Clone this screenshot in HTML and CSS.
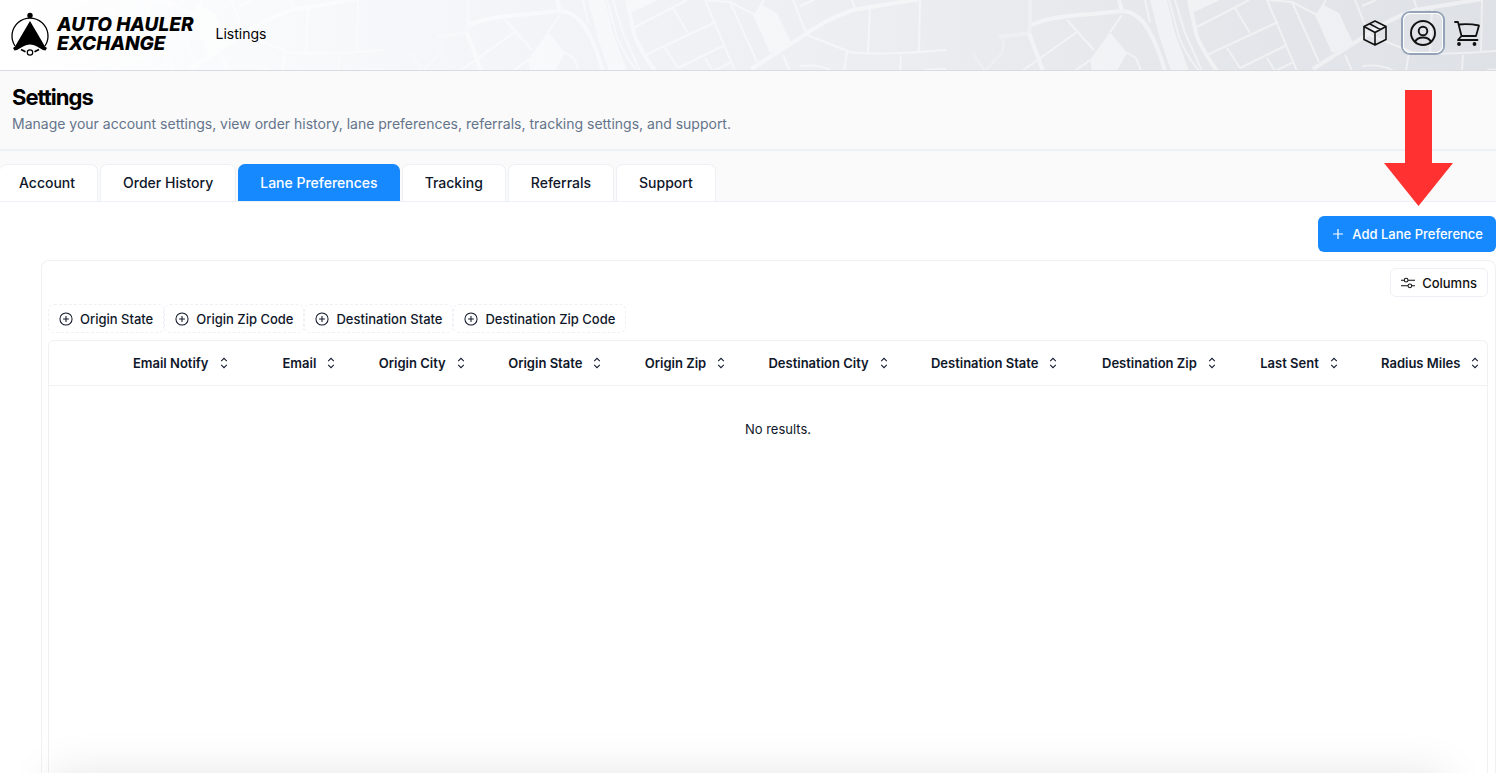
FILE: index.html
```html
<!DOCTYPE html>
<html lang="en">
<head>
    <meta charset="UTF-8">
    <meta name="viewport" content="width=device-width, initial-scale=1.0">
    <title>Settings - Auto Hauler Exchange</title>
    <link rel="stylesheet" href="styles.css">
</head>
<body>
    <!-- Shared icons -->
    <svg class="icon-defs" aria-hidden="true">
        <symbol id="sort" viewBox="0 0 15 15">
            <path d="M4.5 5.5 7.5 2.5l3 3M4.5 9.5l3 3 3-3" fill="none" stroke="currentColor" stroke-width="1.1"/>
        </symbol>
        <symbol id="plus-circle" viewBox="0 0 15 15">
            <path d="M7.5 1a6.5 6.5 0 1 0 0 13 6.5 6.5 0 0 0 0-13ZM7.5 4.4v6.2M4.4 7.5h6.2" fill="none" stroke="currentColor" stroke-width="1.1"/>
        </symbol>
    </svg>

    <header class="topbar">
        <svg class="topbar-map" aria-hidden="true">
            <defs>
                <pattern id="streets" x="-178" y="0" width="562" height="71" patternUnits="userSpaceOnUse">
                    <g fill="#fff">
                        <path d="M164 32 181 53 171 71H146L144 60Z"/>
                        <path d="M204 0H221L229 33 243 71H225L213 35Z"/>
                        <path d="M243 0H274L248 12Z"/>
                        <path d="M378 5 393 13 408 45 386 53 369 15Z"/>
                    </g>
                    <g fill="none" stroke="#fff" stroke-width="4">
                        <path d="M86 25Q100 17 146 14L176 11Q192 12 202 29 212 46 219 71M173 0 176 11"/>
                        <path d="M243 0 250 33Q253 45 271 71M367 69 416 38Q440 20 469 10L536-1"/>
                        <path d="M83 33 97 71"/>
                        <path d="M84 0V27L83 33 53 37" opacity=".5"/>
                    </g>
                    <g fill="none" stroke="#fff" stroke-width="2">
                        <path d="M58 40 56 53 39 71 27 53" opacity=".5"/>
                        <path d="M121 20 148 50M131 32 76 71M176 15 164 32M181 53 190 58 195 71M144 60 129 71"/>
                        <path d="M199 0 204 23M223 0 233 37Q240 55 253 71M229 0 239 33 256 71"/>
                        <path d="M251 27 303 0M261 55 332 22M294 68 341 45M289 8 304 33M281 48 294 68M321 0 351 71M321 58 329 71 348 62"/>
                        <path d="M321 0 346 2 371 15 380 0M346 2 373 62M399 55 406 71"/>
                        <path d="M409 0 423 35 466 52Q490 56 562 50M486 8 484 53M536 0 535 52M463 52 460 71M517 55 516 71"/>
                        <path d="M416 66Q436 64 448 71M541 70 562 69M468 0 471 9M416 6 430 0"/>
                    </g>
                </pattern>
            </defs>
            <rect width="100%" height="71" fill="url(#streets)" opacity=".45"/>
        </svg>

        <a class="brand" href="#">
            <svg class="brand-mark" viewBox="0 0 40 44" aria-hidden="true">
                <path d="M5 34A18 18 0 1 1 35 34" fill="none" stroke="#000" stroke-width="1.300"/>
                <circle cx="20" cy="3.500" r="2.700"/>
                <path d="M20 9 35 34.500 37 36 35.500 38.500 33 38 27 34.500Q20 30.500 13 34.500L7 38 4.500 38.500 3 36 5 34.500Z"/>
                <path d="M11 37.500l4.500 2.200M29 37.500l-4.500 2.200" stroke="#000" stroke-width="1.800"/>
                <circle cx="20" cy="40.500" r="2.700" fill="#fff" stroke="#000" stroke-width="1.200"/>
            </svg>
            <span class="brand-name"><span>AUTO HAULER</span><span>EXCHANGE</span></span>
        </a>
        <nav class="topnav"><a href="#">Listings</a></nav>

        <div class="topbar-actions">
            <button class="icon-btn" type="button" aria-label="Orders">
                <svg width="28" height="28" viewBox="0 0 28 28" fill="none" stroke="currentColor" stroke-width="1.600" stroke-linejoin="round" aria-hidden="true">
                    <path d="M14 2 25 7.500V20.500L14 26 3 20.500V7.500ZM3 7.500 14 13.500 25 7.500M14 13.500V26M8.500 4.800 19.500 10.600"/>
                </svg>
            </button>
            <button class="icon-btn is-focused" type="button" aria-label="Profile">
                <svg width="28" height="28" viewBox="0 0 28 28" fill="none" stroke="currentColor" stroke-width="1.900" aria-hidden="true">
                    <circle cx="14" cy="14" r="12"/>
                    <circle cx="14" cy="12" r="4.300"/>
                    <path d="M6 23Q8 18.500 14 18.500T22 23"/>
                </svg>
            </button>
            <button class="icon-btn" type="button" aria-label="Cart">
                <svg width="28" height="28" viewBox="0 0 28 28" fill="none" stroke="currentColor" stroke-width="1.800" stroke-linecap="round" stroke-linejoin="round" aria-hidden="true">
                    <path d="M2 3H5L8.500 17H23L26 6.500Q16 4.500 6 5.500M8.500 17 5 21H24.500"/>
                    <circle cx="6" cy="25" r="1" fill="currentColor"/>
                    <circle cx="21.500" cy="25" r="1" fill="currentColor"/>
                </svg>
            </button>
        </div>
    </header>

    <section class="page-head">
        <h1>Settings</h1>
        <p>Manage your account settings, view order history, lane preferences, referrals, tracking settings, and support.</p>
    </section>

    <nav class="tabs">
        <a class="tab tab-first" href="#">Account</a>
        <a class="tab" href="#">Order History</a>
        <a class="tab active" href="#" aria-current="page">Lane Preferences</a>
        <a class="tab" href="#">Tracking</a>
        <a class="tab" href="#">Referrals</a>
        <a class="tab" href="#">Support</a>
    </nav>

    <main>
        <div class="actions">
            <button class="add-btn" type="button">
                <svg width="14" height="14" viewBox="0 0 14 14" aria-hidden="true"><path d="M7 2v10M2 7h10" stroke="currentColor" stroke-width="1.200"/></svg>
                Add Lane Preference
            </button>
            <!-- Pointer to the add button -->
            <svg class="pointer" viewBox="0 0 69 116" aria-hidden="true"><path d="M21 0H48V73H69L34.500 116 0 73H21Z" fill="#ff3131"/></svg>
        </div>

        <div class="card">
            <div class="card-top">
                <button class="columns-btn" type="button">
                    <svg width="14" height="14" viewBox="0 0 15 15" fill="none" stroke="currentColor" stroke-width="1.100" aria-hidden="true">
                        <path d="M0 4.500H3.500M7.500 4.500H15M0 10.500H7.500M11.500 10.500H15"/>
                        <circle cx="5.500" cy="4.500" r="2"/>
                        <circle cx="9.500" cy="10.500" r="2"/>
                    </svg>
                    Columns
                </button>
            </div>

            <div class="filters">
                <button class="filter" type="button"><svg class="icon"><use href="#plus-circle"/></svg>Origin State</button>
                <button class="filter" type="button"><svg class="icon"><use href="#plus-circle"/></svg>Origin Zip Code</button>
                <button class="filter" type="button"><svg class="icon"><use href="#plus-circle"/></svg>Destination State</button>
                <button class="filter" type="button"><svg class="icon"><use href="#plus-circle"/></svg>Destination Zip Code</button>
            </div>

            <div class="table-wrap">
                <table>
                    <colgroup>
                        <col class="c-select"><col class="c-notify"><col class="c-email"><col class="c-ocity"><col class="c-ostate"><col class="c-ozip">
                        <col class="c-dcity"><col class="c-dstate"><col class="c-dzip"><col class="c-sent"><col>
                    </colgroup>
                    <thead>
                        <tr>
                            <th></th>
                            <th><button class="sort" type="button">Email Notify<svg class="icon"><use href="#sort"/></svg></button></th>
                            <th><button class="sort" type="button">Email<svg class="icon"><use href="#sort"/></svg></button></th>
                            <th><button class="sort" type="button">Origin City<svg class="icon"><use href="#sort"/></svg></button></th>
                            <th><button class="sort" type="button">Origin State<svg class="icon"><use href="#sort"/></svg></button></th>
                            <th><button class="sort" type="button">Origin Zip<svg class="icon"><use href="#sort"/></svg></button></th>
                            <th><button class="sort" type="button">Destination City<svg class="icon"><use href="#sort"/></svg></button></th>
                            <th><button class="sort" type="button">Destination State<svg class="icon"><use href="#sort"/></svg></button></th>
                            <th><button class="sort" type="button">Destination Zip<svg class="icon"><use href="#sort"/></svg></button></th>
                            <th><button class="sort" type="button">Last Sent<svg class="icon"><use href="#sort"/></svg></button></th>
                            <th><button class="sort" type="button">Radius Miles<svg class="icon"><use href="#sort"/></svg></button></th>
                        </tr>
                    </thead>
                    <tbody>
                        <tr><td class="empty" colspan="11">No results.</td></tr>
                    </tbody>
                </table>
            </div>
        </div>
    </main>
    <div class="bottom-shade"></div>
</body>
</html>
```
FILE: styles.css
```css
:root {
    --primary: #1789ff;
    --text: #0f172a;
    --muted: #64748b;
    --border: #edf0f4;
    --line: #f1f1f3;
}
* {
    box-sizing: border-box;
}
body {
    margin: 0;
    min-height: 100vh;
    display: flex;
    flex-direction: column;
    font-family: Inter, "Liberation Sans", sans-serif;
    font-size: 13px;
    color: var(--text);
    background: #fff;
}
a {
    color: inherit;
    text-decoration: none;
}
button {
    font: inherit;
    color: inherit;
    background: none;
    border: none;
    padding: 0;
    cursor: pointer;
}
.icon-defs {
    position: absolute;
    width: 0;
    height: 0;
}
.icon {
    width: 14px;
    height: 14px;
    flex: none;
}

/* Top bar */
.topbar {
    position: relative;
    display: flex;
    align-items: center;
    height: 71px;
    padding: 0 13px 3px 10px;
    border-bottom: 1px solid #d9dbe1;
    background: linear-gradient(90deg, #fff, #f8f9fb 20%, #ebedf0 60%, #dee1e6);
}
.topbar-map {
    position: absolute;
    inset: 0;
    width: 100%;
    height: 100%;
}
.brand,
.topnav,
.topbar-actions {
    position: relative;
    display: flex;
    align-items: center;
}
.brand {
    gap: 7px;
    color: #000;
}
.brand-mark {
    width: 40px;
    height: 44px;
}
.brand-name {
    display: flex;
    flex-direction: column;
    font-size: 19px;
    font-weight: 800;
    font-style: italic;
    line-height: 19px;
    white-space: nowrap;
}
.topnav {
    margin-left: 22px;
    font-size: 14px;
    color: #000;
}
.topbar-actions {
    margin-left: auto;
    padding-bottom: 1px;
    gap: 8px;
    color: #111;
}
.icon-btn {
    display: flex;
    align-items: center;
    justify-content: center;
    width: 32px;
    height: 40px;
    border-radius: 7px;
}
.icon-btn.is-focused {
    width: 40px;
    margin: 0 0 0 4px;
    box-shadow: inset 0 0 0 1px #fff, 0 0 0 2px #94a3b8;
}

/* Page heading */
.page-head {
    padding: 12px 12px 15px;
    background: #fafafa;
    border-bottom: 2px solid var(--border);
}
.page-head h1 {
    margin: 0;
    font-size: 22px;
    line-height: 28px;
    font-weight: 700;
    letter-spacing: -1px;
    color: #000;
}
.page-head p {
    margin: 3px 0 0;
    font-size: 14px;
    line-height: 20px;
    color: var(--muted);
}

/* Tabs */
.tabs {
    display: flex;
    gap: 2px;
    padding-top: 13px;
    background: #fafafa;
    border-bottom: 1px solid var(--border);
}
.tab {
    padding: 0 22px;
    border: 1px solid var(--border);
    border-bottom: none;
    border-radius: 7px 7px 0 0;
    background: #fff;
    font-size: 14px;
    font-weight: 500;
    line-height: 36px;
}
.tab-first {
    padding-left: 19px;
    border-left: none;
}
.tab.active {
    padding: 0 21px;
    color: #fff;
    background: var(--primary);
    border-color: var(--primary);
}

/* Lane preferences */
main {
    flex: 1;
    display: flex;
    flex-direction: column;
}
.actions {
    position: relative;
    display: flex;
    justify-content: flex-end;
    padding: 14px 0 8px;
}
.add-btn {
    display: flex;
    align-items: center;
    gap: 7px;
    height: 36px;
    padding: 0 13px;
    border-radius: 6px;
    background: var(--primary);
    color: #fff;
    font-weight: 500;
}
.pointer {
    position: absolute;
    right: 43px;
    bottom: 54px;
    width: 69px;
    height: 116px;
}
.card {
    flex: 1;
    display: flex;
    flex-direction: column;
    margin-left: 41px;
    padding: 7px 7px 0 6px;
    border: 1px solid var(--line);
    border-bottom: none;
    border-radius: 8px 8px 0 0;
}
.card-top {
    display: flex;
    justify-content: flex-end;
}
.columns-btn,
.filter {
    display: flex;
    align-items: center;
    gap: 7px;
    height: 29px;
    padding: 0 10px;
    border: 1px solid var(--border);
    border-radius: 6px;
    font-weight: 500;
}
.columns-btn {
    color: #111;
}
.filters {
    display: flex;
    margin: 7px 0;
}
.filter {
    border-style: dashed;
}
.table-wrap {
    flex: 1;
    border: 1px solid var(--line);
    border-bottom: none;
    border-radius: 6px 6px 0 0;
}
table {
    width: 100%;
    table-layout: fixed;
    border-collapse: collapse;
}
th {
    height: 44px;
    padding: 0 0 0 35px;
    text-align: left;
    border-bottom: 1px solid var(--line);
}
.sort {
    display: flex;
    align-items: center;
    gap: 8px;
    font-weight: 600;
    white-space: nowrap;
}
.empty {
    height: 88px;
    padding: 0 0 0 20px;
    text-align: center;
}
.c-select { width: 3.4%; }
.c-notify { width: 10.4%; }
.c-email { width: 6.7%; }
.c-ocity { width: 9%; }
.c-ostate { width: 9.5%; }
.c-ozip { width: 8.6%; }
.c-dcity { width: 11.3%; }
.c-dstate { width: 11.9%; }
.c-dzip { width: 11%; }
.c-sent { width: 8.4%; }

.bottom-shade {
    position: fixed;
    left: 50px;
    right: 50px;
    top: 100%;
    height: 40px;
    box-shadow: 0 0 45px rgba(0, 0, 0, 0.1);
}
```
